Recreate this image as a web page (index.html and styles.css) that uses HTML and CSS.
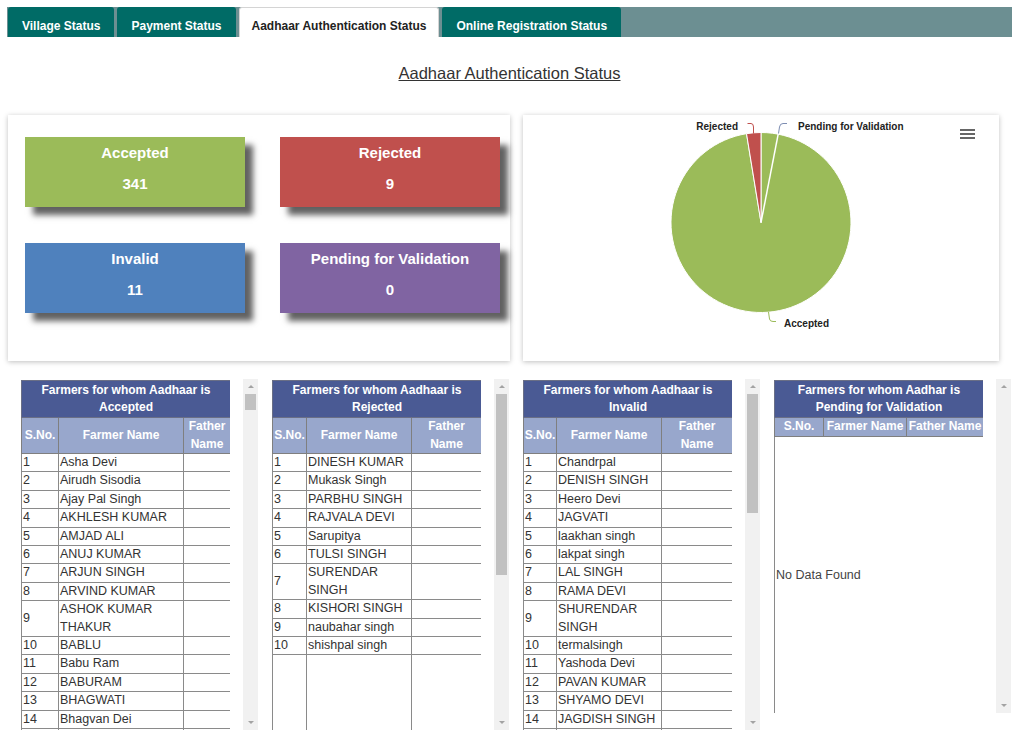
FILE: index.html
```html
<!DOCTYPE html>
<html lang="en">
<head>
<meta charset="utf-8">
<title>Aadhaar Authentication Status</title>
<link rel="stylesheet" href="styles.css">
</head>
<body>
<ul class="tabs">
  <li class="tab">Village Status</li>
  <li class="tab">Payment Status</li>
  <li class="tab active">Aadhaar Authentication Status</li>
  <li class="tab">Online Registration Status</li>
</ul>

<h2 class="page-title">Aadhaar Authentication Status</h2>

<div class="panels">
  <section class="panel stats">
    <div class="card green"><div class="card-label">Accepted</div><div class="card-value">341</div></div>
    <div class="card red"><div class="card-label">Rejected</div><div class="card-value">9</div></div>
    <div class="card blue"><div class="card-label">Invalid</div><div class="card-value">11</div></div>
    <div class="card purple"><div class="card-label">Pending for Validation</div><div class="card-value">0</div></div>
  </section>
  <section class="panel chart">
    <svg class="pie" width="476" height="246" viewBox="0 0 476 246">
      <path d="M238 107.5 L238 17.5 A90 90 0 1 1 223.52 18.67 Z" fill="#9bbb59" stroke="#fff" stroke-width="1"/>
      <path d="M238 107.5 L223.52 18.67 A90 90 0 0 1 238 17.5 Z" fill="#c0504d" stroke="#fff" stroke-width="1"/>
      <path d="M238 107.5 L255.2 19.2" stroke="#fff" stroke-width="1.5" fill="none"/>
      <path d="M224.5 8.5 L228 8.5 Q230.5 8.5 230.5 12 L230.5 18.5" stroke="#c0504d" fill="none"/>
      <path d="M264 8.5 L260 8.5 Q257 8.5 256.5 12 L255.5 18.5" stroke="#7d8db2" fill="none"/>
      <path d="M245.5 197 L246.5 204 Q247 206.5 250 206.5 L253 206.5" stroke="#9bbb59" fill="none"/>
      <text class="pie-label" x="215" y="14.5" text-anchor="end">Rejected</text>
      <text class="pie-label" x="275" y="14.5">Pending for Validation</text>
      <text class="pie-label" x="261" y="212">Accepted</text>
      <path d="M437 15H452M437 19H452M437 23H452" stroke="#666" stroke-width="2" fill="none"/>
    </svg>
  </section>
</div>

<div class="lists">
  <div class="list">
    <div class="list-box">
      <table>
        <colgroup><col class="w37"><col class="w125"><col class="w47"></colgroup>
        <thead>
          <tr><th class="cap" colspan="3">Farmers for whom Aadhaar is<br>Accepted</th></tr>
          <tr class="sub"><th>S.No.</th><th>Farmer Name</th><th>Father Name</th></tr>
        </thead>
        <tbody>
          <tr><td>1</td><td>Asha Devi</td><td></td></tr>
          <tr><td>2</td><td>Airudh Sisodia</td><td></td></tr>
          <tr><td>3</td><td>Ajay Pal Singh</td><td></td></tr>
          <tr><td>4</td><td>AKHLESH KUMAR</td><td></td></tr>
          <tr><td>5</td><td>AMJAD ALI</td><td></td></tr>
          <tr><td>6</td><td>ANUJ KUMAR</td><td></td></tr>
          <tr><td>7</td><td>ARJUN SINGH</td><td></td></tr>
          <tr><td>8</td><td>ARVIND KUMAR</td><td></td></tr>
          <tr><td>9</td><td>ASHOK KUMAR THAKUR</td><td></td></tr>
          <tr><td>10</td><td>BABLU</td><td></td></tr>
          <tr><td>11</td><td>Babu Ram</td><td></td></tr>
          <tr><td>12</td><td>BABURAM</td><td></td></tr>
          <tr><td>13</td><td>BHAGWATI</td><td></td></tr>
          <tr><td>14</td><td>Bhagvan Dei</td><td></td></tr>
          <tr class="filler"><td></td><td></td><td></td></tr>
        </tbody>
      </table>
    </div>
    <div class="sb"><span class="sb-up"></span><div class="sb-track"><div class="sb-thumb" style="height:16px"></div></div><span class="sb-down"></span></div>
  </div>

  <div class="list">
    <div class="list-box">
      <table>
        <colgroup><col class="w34"><col class="w105"><col class="w70"></colgroup>
        <thead>
          <tr><th class="cap" colspan="3">Farmers for whom Aadhaar is<br>Rejected</th></tr>
          <tr class="sub"><th>S.No.</th><th>Farmer Name</th><th>Father Name</th></tr>
        </thead>
        <tbody>
          <tr><td>1</td><td>DINESH KUMAR</td><td></td></tr>
          <tr><td>2</td><td>Mukask Singh</td><td></td></tr>
          <tr><td>3</td><td>PARBHU SINGH</td><td></td></tr>
          <tr><td>4</td><td>RAJVALA DEVI</td><td></td></tr>
          <tr><td>5</td><td>Sarupitya</td><td></td></tr>
          <tr><td>6</td><td>TULSI SINGH</td><td></td></tr>
          <tr><td>7</td><td>SURENDAR SINGH</td><td></td></tr>
          <tr><td>8</td><td>KISHORI SINGH</td><td></td></tr>
          <tr><td>9</td><td>naubahar singh</td><td></td></tr>
          <tr><td>10</td><td>shishpal singh</td><td></td></tr>
          <tr class="filler tall"><td></td><td></td><td></td></tr>
        </tbody>
      </table>
    </div>
    <div class="sb"><span class="sb-up"></span><div class="sb-track"><div class="sb-thumb" style="height:181px"></div></div><span class="sb-down"></span></div>
  </div>

  <div class="list">
    <div class="list-box">
      <table>
        <colgroup><col class="w33"><col class="w105"><col class="w71"></colgroup>
        <thead>
          <tr><th class="cap" colspan="3">Farmers for whom Aadhaar is<br>Invalid</th></tr>
          <tr class="sub"><th>S.No.</th><th>Farmer Name</th><th>Father Name</th></tr>
        </thead>
        <tbody>
          <tr><td>1</td><td>Chandrpal</td><td></td></tr>
          <tr><td>2</td><td>DENISH SINGH</td><td></td></tr>
          <tr><td>3</td><td>Heero Devi</td><td></td></tr>
          <tr><td>4</td><td>JAGVATI</td><td></td></tr>
          <tr><td>5</td><td>laakhan singh</td><td></td></tr>
          <tr><td>6</td><td>lakpat singh</td><td></td></tr>
          <tr><td>7</td><td>LAL SINGH</td><td></td></tr>
          <tr><td>8</td><td>RAMA DEVI</td><td></td></tr>
          <tr><td>9</td><td>SHURENDAR SINGH</td><td></td></tr>
          <tr><td>10</td><td>termalsingh</td><td></td></tr>
          <tr><td>11</td><td>Yashoda Devi</td><td></td></tr>
          <tr><td>12</td><td>PAVAN KUMAR</td><td></td></tr>
          <tr><td>13</td><td>SHYAMO DEVI</td><td></td></tr>
          <tr><td>14</td><td>JAGDISH SINGH</td><td></td></tr>
          <tr class="filler"><td></td><td></td><td></td></tr>
        </tbody>
      </table>
    </div>
    <div class="sb"><span class="sb-up"></span><div class="sb-track"><div class="sb-thumb" style="height:119px"></div></div><span class="sb-down"></span></div>
  </div>

  <div class="list short">
    <div class="list-box">
      <table class="pending">
        <colgroup><col class="w49"><col class="w83"><col class="w77"></colgroup>
        <thead>
          <tr><th class="cap" colspan="3">Farmers for whom Aadhar is<br>Pending for Validation</th></tr>
          <tr class="sub single"><th>S.No.</th><th>Farmer Name</th><th>Father Name</th></tr>
        </thead>
        <tbody>
          <tr><td class="empty" colspan="3">No Data Found</td></tr>
        </tbody>
      </table>
    </div>
    <div class="sb"><span class="sb-up"></span><div class="sb-track"></div><span class="sb-down"></span></div>
  </div>
</div>
</body>
</html>
```

FILE: styles.css
```css
* { box-sizing: border-box; }
html, body { margin: 0; }
body {
  width: 1024px;
  padding: 7px 12px 0 7px;
  font-family: "Liberation Sans", Arial, sans-serif;
  color: #333;
  background: #fff;
}

/* tabs */
.tabs {
  display: flex;
  gap: 3px;
  height: 30px;
  margin: 0;
  padding: 0 0 0 1px;
  list-style: none;
  background: #6c8f92;
}
.tab {
  padding: 8px 14px 0;
  line-height: 22px;
  font-size: 12px;
  font-weight: bold;
  color: #fff;
  background: #006b66;
  border-radius: 3px 3px 0 0;
  white-space: nowrap;
}
.tab.active {
  background: #fff;
  color: #222;
  border: 1px solid #d4d4d4;
  border-bottom: 0;
  padding: 7px 12px 0;
}

.page-title {
  margin: 26px 0 0;
  text-align: center;
  font-size: 16.5px;
  line-height: 20px;
  font-weight: normal;
  text-decoration: underline;
  color: #333;
}

/* panels */
.panels {
  display: flex;
  gap: 13px;
  margin-top: 32px;
  padding-left: 1px;
}
.panel {
  height: 246px;
  background: #fff;
  box-shadow: 0 1px 5px rgba(0, 0, 0, 0.25);
}
.stats {
  width: 502px;
  display: grid;
  grid-template-columns: 220px 220px;
  grid-template-rows: 70px 70px;
  column-gap: 35px;
  row-gap: 36px;
  align-content: start;
  padding: 22px 0 0 17px;
}
.card {
  padding-top: 7px;
  text-align: center;
  color: #fff;
  font-size: 15px;
  font-weight: bold;
  box-shadow: 8px 8px 6px rgba(0, 0, 0, 0.62);
}
.card-label { line-height: 18px; }
.card-value { margin-top: 13px; line-height: 18px; }
.green { background: #9bbb59; }
.red { background: #c0504d; }
.blue { background: #4f81bd; }
.purple { background: #8064a2; }

.chart { width: 476px; }
.pie { display: block; }
.pie-label {
  font-family: "Liberation Sans", Arial, sans-serif;
  font-size: 10px;
  font-weight: bold;
  fill: #222;
}

/* lists */
.lists {
  display: flex;
  gap: 14px;
  margin-top: 18px;
  padding-left: 14px;
}
.list {
  display: flex;
  justify-content: space-between;
  width: 237px;
  height: 351px;
}
.list.short { height: 334px; }
.list-box {
  width: 209px;
  overflow: hidden;
  padding-top: 1px;
}
table {
  width: 209px;
  border-collapse: collapse;
  table-layout: fixed;
}
.w33 { width: 33px; }
.w34 { width: 34px; }
.w37 { width: 37px; }
.w47 { width: 47px; }
.w49 { width: 49px; }
.w70 { width: 70px; }
.w71 { width: 71px; }
.w77 { width: 77px; }
.w83 { width: 83px; }
.w105 { width: 105px; }
.w125 { width: 125px; }

th {
  padding: 0;
  font-size: 12px;
  font-weight: bold;
  color: #fff;
  line-height: 17.5px;
  text-align: center;
  border: 1px solid #7f7f7f;
}
th.cap {
  background: #4a5a94;
  border-color: #6a6f86;
  line-height: 17.5px;
  padding: 0.5px 0;
}
.sub th { background: #98a7cc; }
.sub.single th { white-space: nowrap; }

td {
  padding: 0 1px;
  font-size: 12.5px;
  line-height: 17.4px;
  color: #333;
  border: 1px solid #8a8a8a;
  vertical-align: middle;
  overflow: hidden;
}
.filler td { height: 40px; }
.filler.tall td { height: 120px; }
td.empty {
  height: 279px;
  color: #444;
  text-align: left;
}

/* scrollbars */
.sb {
  display: flex;
  flex-direction: column;
  width: 15px;
  background: #f1f1f1;
}
.sb-up, .sb-down {
  display: flex;
  align-items: center;
  justify-content: center;
  height: 15px;
  flex: none;
}
.sb-up::before {
  content: "";
  border-left: 3px solid transparent;
  border-right: 3px solid transparent;
  border-bottom: 3px solid #a3a3a3;
}
.sb-down::before {
  content: "";
  border-left: 3px solid transparent;
  border-right: 3px solid transparent;
  border-top: 3px solid #a3a3a3;
}
.sb-track {
  flex: 1;
  padding: 0 2px;
}
.sb-thumb { background: #c1c1c1; }
```
